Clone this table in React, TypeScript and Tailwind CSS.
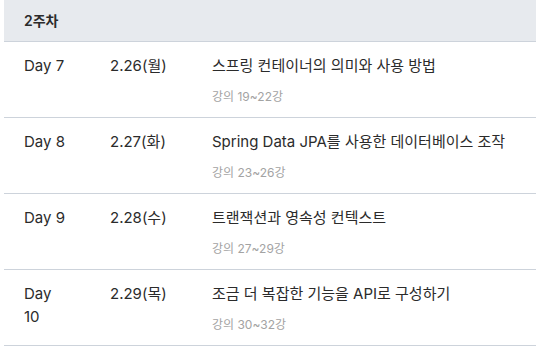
import React from 'react';

type Lesson = {
  day: string;
  date: string;
  title: string;
  lectures: string;
};

const lessons: Lesson[] = [
  { day: 'Day 7', date: '2.26(월)', title: '스프링 컨테이너의 의미와 사용 방법', lectures: '강의 19~22강' },
  { day: 'Day 8', date: '2.27(화)', title: 'Spring Data JPA를 사용한 데이터베이스 조작', lectures: '강의 23~26강' },
  { day: 'Day 9', date: '2.28(수)', title: '트랜잭션과 영속성 컨텍스트', lectures: '강의 27~29강' },
  { day: 'Day 10', date: '2.29(목)', title: '조금 더 복잡한 기능을 API로 구성하기', lectures: '강의 30~32강' },
];

const App: React.FC = () => {
  return (
    <div
      className="w-[536px] h-[348px] bg-white pl-1 overflow-hidden text-[#2b2b2b]"
      style={{ fontFamily: 'Inter, "Noto Sans CJK KR", sans-serif' }}
    >
      <div className="h-[42px] bg-[#e7eaee] border-b border-[#cdd3db] flex items-center px-5">
        <span className="text-[14px] font-semibold">2주차</span>
      </div>

      {lessons.map((lesson) => (
        <div
          key={lesson.day}
          className="grid grid-cols-[86px_102px_1fr] border-b border-[#cdd3db] pt-3 pb-[11px] text-[15px] leading-[23px]"
        >
          <div className="pl-5">
            <div className="max-w-[46px]">{lesson.day}</div>
          </div>
          <div className="pl-5">{lesson.date}</div>
          <div className="pl-5">
            <div>{lesson.title}</div>
            <div className="mt-[11px] text-[12px] leading-[18px] text-[#a3a3a3]">{lesson.lectures}</div>
          </div>
        </div>
      ))}
    </div>
  );
};

export default App;
